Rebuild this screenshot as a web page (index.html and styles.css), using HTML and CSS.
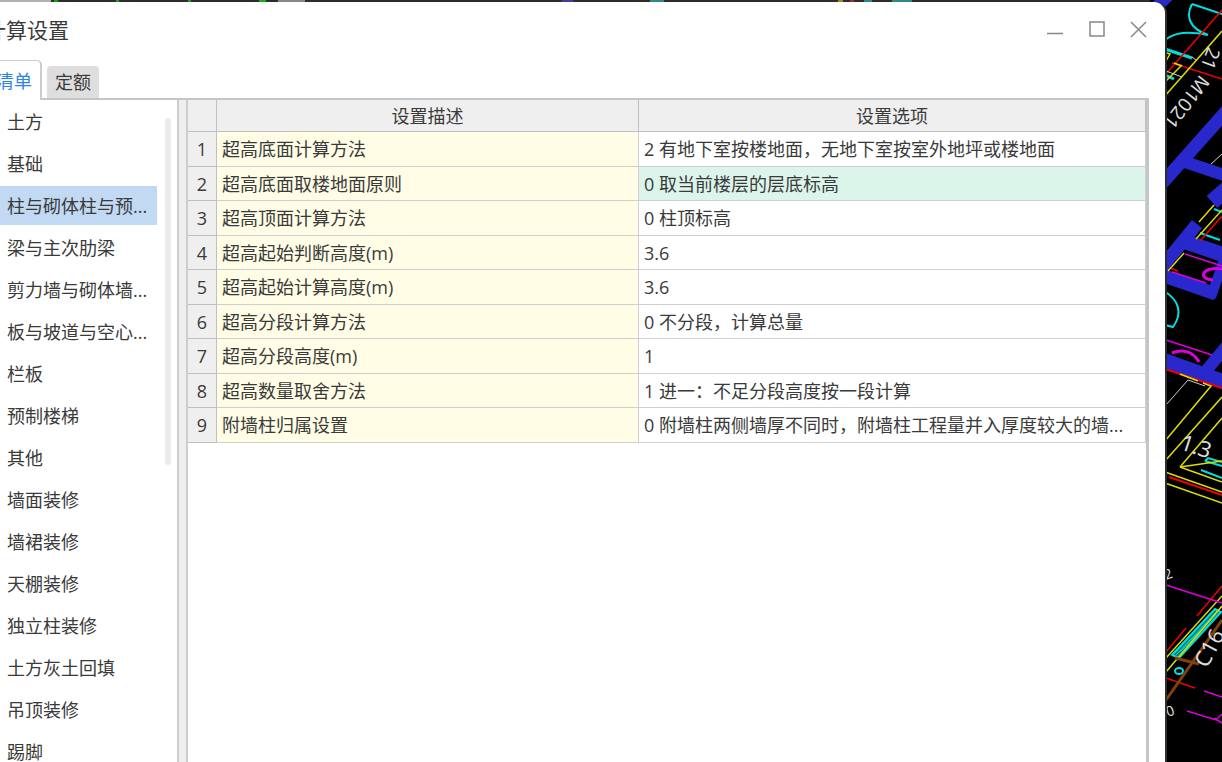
FILE: index.html
```html
<!DOCTYPE html>
<html lang="zh-CN">
<head>
<meta charset="utf-8">
<title>计算设置</title>
<link rel="stylesheet" href="styles.css">
</head>
<body>
<svg class="drawing" width="72" height="762" viewBox="0 0 72 762" fill="none" aria-hidden="true">
  <rect width="72" height="762" fill="#000"/>
  <g stroke="#2828cc">
    <path d="M-4 17L22 -8" stroke-width="12"/>
    <path d="M8 188L80 107" stroke-width="13"/>
    <path d="M35 162L80 177" stroke-width="12"/>
    <path d="M62 202L80 186" stroke-width="16"/>
    <path d="M8 272L47 224" stroke-width="13"/>
    <path d="M30 240L80 257" stroke-width="15"/>
    <path d="M14 276L66 294" stroke-width="13"/>
    <path d="M61 297L76 254" stroke-width="10"/>
    <path d="M10 359L80 384" stroke-width="15"/>
    <path d="M55 372L80 342" stroke-width="12"/>
  </g>
  <g stroke="#00dede" stroke-width="2">
    <path d="M42 4L72 14M42 4C36 15 38 28 58 35M15 40C25 32 38 31 58 35"/>
    <path d="M15 49L42 58M15 75L24 79" stroke-width="3"/>
    <path d="M50 233L70 240M64 209L72 212"/>
    <path d="M14 291C29 300 33 313 23 327L15 325"/>
    <path d="M55 461L72 466M55 461L58 458L72 462M51 470L72 478"/>
    <path d="M22 655L65 609L71 612L29 658Z" fill="#087878"/>
    <path d="M26 655L68 610M30 652L66 614" stroke-width="1"/>
    <ellipse cx="29" cy="671" rx="4" ry="3"/>
  </g>
  <g stroke="#ee0000" stroke-width="1.500">
    <path d="M15 75L72 10M22 63L72 79"/>
    <path d="M50 241L72 216M20 268L28 271"/>
    <path d="M15 369L72 388M19 477L72 495" stroke-width="2"/>
    <path d="M47 616L72 586M16 652L36 628M16 678L45 688"/>
  </g>
  <g stroke="#dddd00" stroke-width="1.500">
    <path d="M14 97L72 31M14 83L32 65M24 63L32 66M16 61L20 54L17 53"/>
    <path d="M49 222L64 205M46 239L72 210M18 271L34 253"/>
    <path d="M30 374L48 381M15 441L61 386L53 383M15 461L72 397M30 467L72 418M30 467L72 461M30 467L72 482M15 472L72 492M15 483L72 503"/>
    <path d="M16 658L72 596M16 672L72 606"/>
  </g>
  <g stroke="#dd00dd" stroke-width="1.500">
    <path d="M35 254L72 266M22 272L56 283M16 340L62 355M16 585L72 603M54 691L72 697M37 711L66 720L72 714M64 718L72 723"/>
    <path d="M72 269C52 266 47 279 63 280M22 353C32 349 43 351 49 362" stroke-width="3"/>
  </g>
  <path d="M25 658L49 664M16 700L72 620" stroke="#844008" stroke-width="3"/>
  <path d="M16 405L38 380L55 386M16 71L32 77M42 57L46 60M61 164L72 154" stroke="#cfcfcf"/>
  <g class="drawing-text">
    <text transform="translate(50 74) rotate(128)">M1021</text>
    <text transform="translate(58 46) rotate(110)">21</text>
    <text transform="translate(29 449) rotate(18)" class="drawing-large">1.3</text>
    <text transform="translate(57 669) rotate(-62)" class="drawing-large">C16</text>
    <text transform="translate(18 717) rotate(-20)" class="drawing-small">0</text>
    <text transform="translate(16 580) rotate(-20)" class="drawing-small">2</text>
  </g>
</svg>
<main class="window">
  <header class="titlebar">
    <h1 class="title">计算设置</h1>
    <div class="controls">
      <button class="control" type="button" aria-label="最小化"><svg width="18" height="18" viewBox="0 0 18 18"><path d="M1 12.500H17"/></svg></button>
      <button class="control" type="button" aria-label="最大化"><svg width="18" height="18" viewBox="0 0 18 18"><rect x="2" y="1" width="14" height="14"/></svg></button>
      <button class="control" type="button" aria-label="关闭"><svg width="18" height="18" viewBox="0 0 18 18"><path d="M1 1L16 16M16 1L1 16"/></svg></button>
    </div>
  </header>
  <div class="tabs" role="tablist">
    <button class="tab tab-active" type="button" role="tab" aria-selected="true">清单</button>
    <button class="tab" type="button" role="tab" aria-selected="false">定额</button>
  </div>
  <div class="content">
    <nav class="sidebar">
      <ul class="categories">
        <li><button class="category" type="button">土方</button></li>
        <li><button class="category" type="button">基础</button></li>
        <li><button class="category category-active" type="button">柱与砌体柱与预...</button></li>
        <li><button class="category" type="button">梁与主次肋梁</button></li>
        <li><button class="category" type="button">剪力墙与砌体墙...</button></li>
        <li><button class="category" type="button">板与坡道与空心...</button></li>
        <li><button class="category" type="button">栏板</button></li>
        <li><button class="category" type="button">预制楼梯</button></li>
        <li><button class="category" type="button">其他</button></li>
        <li><button class="category" type="button">墙面装修</button></li>
        <li><button class="category" type="button">墙裙装修</button></li>
        <li><button class="category" type="button">天棚装修</button></li>
        <li><button class="category" type="button">独立柱装修</button></li>
        <li><button class="category" type="button">土方灰土回填</button></li>
        <li><button class="category" type="button">吊顶装修</button></li>
        <li><button class="category" type="button">踢脚</button></li>
      </ul>
      <div class="scroll-track"><div class="scroll-thumb"></div></div>
    </nav>
    <div class="splitter"></div>
    <section class="panel">
      <table class="settings">
        <colgroup><col class="col-number"><col class="col-name"><col></colgroup>
        <thead><tr><th></th><th>设置描述</th><th>设置选项</th></tr></thead>
        <tbody>
          <tr><th>1</th><td>超高底面计算方法</td><td>2 有地下室按楼地面，无地下室按室外地坪或楼地面</td></tr>
          <tr class="current"><th>2</th><td>超高底面取楼地面原则</td><td>0 取当前楼层的层底标高</td></tr>
          <tr><th>3</th><td>超高顶面计算方法</td><td>0 柱顶标高</td></tr>
          <tr><th>4</th><td>超高起始判断高度(m)</td><td>3.6</td></tr>
          <tr><th>5</th><td>超高起始计算高度(m)</td><td>3.6</td></tr>
          <tr><th>6</th><td>超高分段计算方法</td><td>0 不分段，计算总量</td></tr>
          <tr><th>7</th><td>超高分段高度(m)</td><td>1</td></tr>
          <tr><th>8</th><td>超高数量取舍方法</td><td>1 进一：不足分段高度按一段计算</td></tr>
          <tr><th>9</th><td>附墙柱归属设置</td><td>0 附墙柱两侧墙厚不同时，附墙柱工程量并入厚度较大的墙...</td></tr>
        </tbody>
      </table>
    </section>
  </div>
</main>
</body>
</html>
```
FILE: styles.css
```css
* {
  box-sizing: border-box;
}

body {
  margin: 0;
  height: 100vh;
  overflow: hidden;
  display: flex;
  padding: 2px 57px 0 0;
  background: linear-gradient(90deg, #b2b0b0 0 51px, #302c2d 51px 54px, #12a012 54px 58px, #302c2d 58px 116px, #20a020 116px 119px, #302c2d 119px 188px, #20a020 188px 191px, #302c2d 191px 259px, #16b016 259px 266px, #302c2d 266px 278px, #888 278px 305px, #302c2d 305px 562px, #3e3ea0 562px 573px, #302c2d 573px 650px, #2e8884 650px 664px, #302c2d 664px 838px, #958c28 838px 843px, #302c2d 843px 850px, #a02828 850px 854px, #302c2d 854px 864px, #2e8884 864px 872px, #302c2d 872px 892px, #2e8884 892px 912px, #302c2d 912px);
  color: #3a3a3a;
  font-family: "Open Sans", "Noto Sans CJK SC", sans-serif;
  font-size: 18px;
  line-height: 24px;
}

button {
  border: 0;
  background: none;
  padding: 0;
  color: inherit;
  font: inherit;
}

.drawing {
  position: absolute;
  top: 0;
  right: 0;
}

.drawing-text {
  fill: #dcdcdc;
  font-family: "Noto Sans", sans-serif;
  font-size: 19px;
}

.drawing-large {
  font-size: 22px;
}

.drawing-small {
  font-size: 14px;
}

.window {
  position: relative;
  flex: 1;
  min-width: 0;
  display: flex;
  flex-direction: column;
  overflow: hidden;
  background: #fff;
  border-top-right-radius: 11px;
  box-shadow: 2px 0 #2b2f30;
}

.titlebar {
  display: flex;
  align-items: center;
  justify-content: space-between;
  height: 56px;
  padding-right: 17px;
}

.title {
  margin: 0 0 0 -15px;
  font-size: 21px;
  font-weight: 400;
}

.controls {
  display: flex;
  gap: 24px;
}

.control {
  display: flex;
}

.control svg {
  fill: none;
  stroke: #888;
  stroke-width: 1.5;
}

.tabs {
  display: flex;
  align-items: flex-end;
  gap: 5px;
  height: 42px;
  margin-right: 16px;
  border-bottom: 2px solid #c3c6c9;
}

.tab {
  height: 32px;
  padding: 0 8px;
  border-radius: 4px 4px 0 0;
  background: #dedede;
}

.tab-active {
  height: 40px;
  margin: 0 0 -2px -4px;
  padding: 0 8px 0 0;
  border: solid #c9ced2;
  border-width: 1px 2px 0 0;
  border-radius: 0 5px 0 0;
  background: #fff;
  color: #2b83ea;
}

.content {
  flex: 1;
  min-height: 0;
  display: flex;
  margin-right: 16px;
  border-right: 3px solid #c3c6c9;
}

.sidebar {
  width: 177px;
  display: flex;
  gap: 8px;
}

.categories {
  width: 157px;
  margin: 0;
  padding: 2px 0 0;
  list-style: none;
  display: flex;
  flex-direction: column;
  gap: 3px;
}

.category {
  display: block;
  width: 100%;
  height: 39px;
  padding-left: 7px;
  text-align: left;
  white-space: nowrap;
}

.category-active {
  background: #c1d9f2;
}

.scroll-track {
  width: 6px;
  padding-top: 18px;
}

.scroll-thumb {
  height: 347px;
  border-radius: 3px;
  background: #ebebeb;
}

.splitter {
  width: 11px;
  border: solid #cdcdcd;
  border-width: 0 2px;
  background: #efefef;
}

.panel {
  flex: 1;
  min-width: 0;
}

.settings {
  width: 100%;
  table-layout: fixed;
  border-spacing: 0;
}

.col-number {
  width: 29px;
}

.col-name {
  width: 422px;
}

.settings th,
.settings td {
  height: 35px;
  padding: 0 5px;
  border: solid #cfcfcf;
  border-width: 0 1px 1px 0;
  overflow: hidden;
  white-space: nowrap;
  text-align: left;
  font-weight: 400;
}

.settings tbody tr:nth-child(even) > * {
  height: 34px;
}

.settings th {
  padding: 0;
  border-color: #c0c0c0;
  background: #efefef;
  text-align: center;
}

.settings thead th {
  height: 32px;
}

.settings td:nth-child(2) {
  background: #fffde6;
}

.settings .current td:last-child {
  background: #dcf5eb;
}
```
